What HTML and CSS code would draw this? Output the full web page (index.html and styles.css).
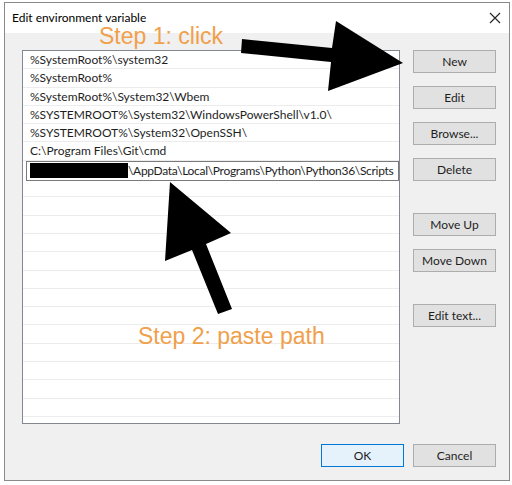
FILE: index.html
```html
<!DOCTYPE html>
<html lang="en">

<head>
    <meta charset="UTF-8">
    <meta name="viewport" content="width=device-width, initial-scale=1.0">
    <title>Edit environment variable</title>
    <link rel="stylesheet" href="styles.css">
</head>

<body>
    <div class="dialog">
        <div class="titlebar">
            <span class="title">Edit environment variable</span>
            <svg class="close" width="12" height="12" viewBox="0 0 12 12">
                <path d="M1 1 L11 11 M11 1 L1 11" stroke="#222" stroke-width="1.1" fill="none" />
            </svg>
        </div>
        <div class="main">
            <div class="list">
                <div class="row">%SystemRoot%\system32</div>
                <div class="row">%SystemRoot%</div>
                <div class="row">%SystemRoot%\System32\Wbem</div>
                <div class="row">%SYSTEMROOT%\System32\WindowsPowerShell\v1.0\</div>
                <div class="row">%SYSTEMROOT%\System32\OpenSSH\</div>
                <div class="row">C:\Program Files\Git\cmd</div>
                <div class="row editing">
                    <div class="editbox"><span class="redact"></span>\AppData\Local\Programs\Python\Python36\Scripts</div>
                </div>
                <div class="row"></div>
                <div class="row"></div>
                <div class="row"></div>
                <div class="row"></div>
                <div class="row"></div>
                <div class="row"></div>
                <div class="row"></div>
                <div class="row"></div>
                <div class="row"></div>
                <div class="row"></div>
                <div class="row"></div>
                <div class="row"></div>
                <div class="row"></div>
                <div class="row"></div>
            </div>
            <div class="side">
                <button class="btn">New</button>
                <button class="btn">Edit</button>
                <button class="btn">Browse...</button>
                <button class="btn">Delete</button>
                <button class="btn group">Move Up</button>
                <button class="btn">Move Down</button>
                <button class="btn group">Edit text...</button>
            </div>
        </div>
        <div class="footer">
            <button class="btn ok">OK</button>
            <button class="btn">Cancel</button>
        </div>
    </div>

    <!-- annotations drawn over the screenshot -->
    <div class="step step1">Step 1: click</div>
    <div class="step step2">Step 2: paste path</div>
    <svg class="arrows" width="512" height="485" viewBox="0 0 512 485">
        <polygon points="242,39 332,48 336,21 403,63 328,91 331,62 241,53" fill="#000" />
        <polygon points="170,182 231,233 206,244 232,309 218,314 192,250 165,261" fill="#000" />
    </svg>
</body>

</html>
```

FILE: styles.css
```css
* {
    margin: 0;
    padding: 0;
    box-sizing: border-box;
}

body {
    width: 512px;
    height: 485px;
    overflow: hidden;
    position: relative;
    background: #fff;
    font-family: Lato, "Noto Sans", sans-serif;
    font-size: 12px;
    color: #1e1e1e;
}

.dialog {
    margin: 2px 0 0 4px;
    width: 506px;
    height: 479px;
    border: 1px solid #8a8a8a;
    background: #f0f0f0;
    display: flex;
    flex-direction: column;
}

.titlebar {
    height: 30px;
    background: #fff;
    display: flex;
    align-items: center;
    justify-content: space-between;
    padding: 0 8px 0 7px;
}

.title {
    color: #000;
    line-height: 14px;
}

.main {
    display: flex;
    gap: 13px;
    padding: 17px 13px 0 17px;
}

.list {
    width: 378px;
    height: 374px;
    border: 1px solid #828790;
    background: #fff;
    overflow: hidden;
}

.row {
    height: 18.3px;
    line-height: 17px;
    padding-left: 7px;
    border-bottom: 1px solid #ececec;
    white-space: nowrap;
}

.row.editing {
    padding-left: 3px;
    border-bottom: none;
}

.editbox {
    height: 20px;
    line-height: 18px;
    border: 1px solid #7a7a7a;
    padding-left: 3px;
    background: #fff;
    white-space: nowrap;
    overflow: hidden;
    letter-spacing: -0.3px;
}

.redact {
    display: inline-block;
    width: 98px;
    height: 15px;
    background: #000;
    vertical-align: -3px;
}

.side {
    width: 83px;
    display: flex;
    flex-direction: column;
    gap: 13px;
}

.btn {
    width: 83px;
    height: 23px;
    border: 1px solid #adadad;
    background: #e1e1e1;
    font: inherit;
    color: #1e1e1e;
}

.side .group {
    margin-top: 19px;
}

.footer {
    margin-top: auto;
    display: flex;
    justify-content: flex-end;
    gap: 9px;
    padding: 0 13px 13px;
}

.btn.ok {
    background: #e5f1fb;
    border-color: #0078d7;
}

.step {
    position: absolute;
    font-family: "Liberation Sans", Arial, sans-serif;
    font-size: 23px;
    line-height: 18px;
    color: #f0a04b;
    white-space: nowrap;
}

.step1 {
    left: 99px;
    top: 27px;
}

.step2 {
    left: 138px;
    top: 327px;
}

.arrows {
    position: absolute;
    left: 0;
    top: 0;
    pointer-events: none;
}
```
